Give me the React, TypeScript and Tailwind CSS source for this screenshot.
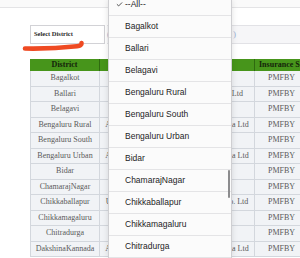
import { Check } from 'lucide-react';

interface Row {
  district: string;
  insurer: string;
  scheme: string;
}

const rows: Row[] = [
  { district: 'Bagalkot', insurer: 'Universal Sompo GIC', scheme: 'PMFBY' },
  { district: 'Ballari', insurer: 'HDFC ERGO General Insurance Co. Ltd', scheme: 'PMFBY' },
  { district: 'Belagavi', insurer: 'Universal Sompo GIC', scheme: 'PMFBY' },
  { district: 'Bengaluru Rural', insurer: 'Agriculture Insurance Company of India Ltd', scheme: 'PMFBY' },
  { district: 'Bengaluru South', insurer: 'Universal Sompo GIC', scheme: 'PMFBY' },
  { district: 'Bengaluru Urban', insurer: 'Agriculture Insurance Company of India Ltd', scheme: 'PMFBY' },
  { district: 'Bidar', insurer: 'Universal Sompo GIC', scheme: 'PMFBY' },
  { district: 'ChamarajNagar', insurer: 'Cholamandalam MS GIC', scheme: 'PMFBY' },
  { district: 'Chikkaballapur', insurer: 'Universal Sompo General Insurance Co. Ltd', scheme: 'PMFBY' },
  { district: 'Chikkamagaluru', insurer: 'Cholamandalam MS GIC', scheme: 'PMFBY' },
  { district: 'Chitradurga', insurer: 'Universal Sompo GIC', scheme: 'PMFBY' },
  { district: 'DakshinaKannada', insurer: 'Agriculture Insurance Company of India Ltd', scheme: 'PMFBY' },
];

const options = [
  '--All--',
  'Bagalkot',
  'Ballari',
  'Belagavi',
  'Bengaluru Rural',
  'Bengaluru South',
  'Bengaluru Urban',
  'Bidar',
  'ChamarajNagar',
  'Chikkaballapur',
  'Chikkamagaluru',
  'Chitradurga',
];

export default function App() {
  return (
    <div className="relative w-[300px] h-[258px] overflow-hidden bg-white font-['Liberation_Serif',serif]">
      {/* top strip */}
      <div className="h-[8px] border-b border-[#e4e4e6] bg-[#fafafa]" />

      {/* filter row */}
      <div className="flex mt-[17px] pl-[30px] h-[19px]">
        <div className="w-[75px] h-[19px] border border-[#d2d2d6] bg-white flex items-center pl-[3px]">
          <span className="text-[6.5px] font-bold text-[#2b2b2b] leading-none">Select District</span>
        </div>
        <div className="flex-1 ml-[2px] h-[19px] border-y border-[#e2e2e6] bg-[#f6f6f8] flex items-center">
          <span className="text-[9px] text-[#9db3d4] leading-none">(</span>
          <span className="ml-[123px] text-[9px] text-[#9db3d4] leading-none">)</span>
        </div>
      </div>

      {/* table */}
      <div className="mt-[15px] ml-[30px] w-[330px] text-[8px]">
        <div className="grid grid-cols-[70px_155px_105px] h-[12px] bg-[#47951b] text-[#14240a] font-bold">
          <div className="flex items-center justify-center border-r border-[#2f6a10]">District</div>
          <div className="border-r border-[#2f6a10]" />
          <div className="flex items-center pl-[4px] whitespace-nowrap">Insurance Scheme</div>
        </div>
        {rows.map((r) => (
          <div
            key={r.district}
            className="grid grid-cols-[70px_155px_105px] h-[15.5px] bg-[#f1f3f6] border-b border-[#d3d7dd] text-[#5a5a5a]"
          >
            <div className="flex items-center justify-center border-x border-[#d3d7dd] whitespace-nowrap">
              {r.district}
            </div>
            <div className="flex items-center justify-center border-r border-[#d3d7dd] whitespace-nowrap overflow-hidden">
              {r.insurer}
            </div>
            <div className="flex items-center pl-[13px] whitespace-nowrap">{r.scheme}</div>
          </div>
        ))}
      </div>

      {/* red marker stroke */}
      <svg className="absolute left-0 top-0 pointer-events-none" width="100" height="60" viewBox="0 0 100 60">
        <path
          d="M25 48.5 Q 52 49 77 46.2 Q 82 45.6 81.5 43"
          fill="none"
          stroke="#ef4a22"
          strokeWidth="4.6"
          strokeLinecap="round"
          strokeLinejoin="round"
        />
      </svg>

      {/* open select menu */}
      <div className="absolute left-[108px] top-0 w-[124px] h-full bg-[#fbfbfb] border-x border-[#cfcfd2] shadow-[0_0_6px_rgba(0,0,0,0.12)] overflow-hidden font-['Liberation_Sans',sans-serif]">
        <div className="-mt-[6px]">
          {options.map((o, i) => (
            <div key={o} className="h-[22px] border-b border-[#e4e4e6] flex items-center pl-[7px] text-[8.5px] text-[#1d1d1f]">
              <span className="w-[9px] flex items-center">
                {i === 0 && <Check size={7} strokeWidth={2.6} className="text-[#1d1d1f]" />}
              </span>
              <span>{o}</span>
            </div>
          ))}
        </div>
        <div className="absolute right-[1px] top-[170px] w-[2.5px] h-[28px] rounded-full bg-[#8c8c8e]" />
      </div>
    </div>
  );
}
